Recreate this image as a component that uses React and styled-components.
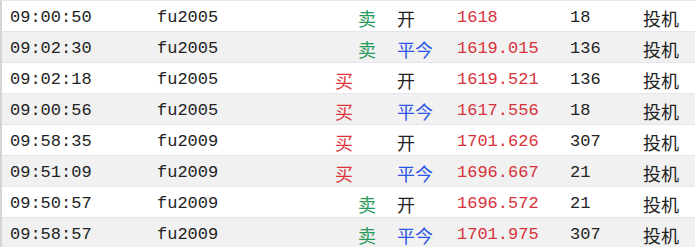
import styled, { createGlobalStyle } from 'styled-components';

const GlobalStyle = createGlobalStyle`
  html, body {
    margin: 0;
    padding: 0;
    background: #ffffff;
  }
`;

const Table = styled.div`
  width: 695px;
  height: 247px;
  overflow: hidden;
  border-top: 1px solid #e6e6ea;
  border-left: 2px solid #d4d4d4;
  box-sizing: border-box;
  font-family: "Liberation Mono", "Noto Sans CJK SC", monospace;
  font-size: 17px;
  color: #222222;
`;

const Row = styled.div`
  display: grid;
  grid-template-columns: 147px 178px 62px 60px 113px 73px 1fr;
  align-items: center;
  height: 27px;
  padding: 3px 0 0 8px;
  box-sizing: content-box;
  border-bottom: 1px solid #e4e4ec;
  background: ${(p) => (p.$alt ? '#f1f1f1' : '#ffffff')};
`;

const Cell = styled.span`
  white-space: nowrap;
`;

const Cjk = styled.span`
  font-family: "Noto Sans CJK SC", sans-serif;
  font-size: 18px;
  white-space: nowrap;
  color: ${(p) => p.$color || '#222222'};
  padding-left: ${(p) => p.$indent || 0}px;
`;

const Price = styled.span`
  color: #d8323a;
  white-space: nowrap;
`;

const rows = [
  ['09:00:50', 'fu2005', 'sell', 'open', '1618', '18'],
  ['09:02:30', 'fu2005', 'sell', 'close', '1619.015', '136'],
  ['09:02:18', 'fu2005', 'buy', 'open', '1619.521', '136'],
  ['09:00:56', 'fu2005', 'buy', 'close', '1617.556', '18'],
  ['09:58:35', 'fu2009', 'buy', 'open', '1701.626', '307'],
  ['09:51:09', 'fu2009', 'buy', 'close', '1696.667', '21'],
  ['09:50:57', 'fu2009', 'sell', 'open', '1696.572', '21'],
  ['09:58:57', 'fu2009', 'sell', 'close', '1701.975', '307'],
];

export default function App() {
  return (
    <>
      <GlobalStyle />
      <Table>
        {rows.map(([time, code, side, offset, price, vol], i) => (
          <Row key={i} $alt={i % 2 === 1}>
            <Cell>{time}</Cell>
            <Cell>{code}</Cell>
            {side === 'sell' ? (
              <Cjk $color="#2a9a5c" $indent={23}>卖</Cjk>
            ) : (
              <Cjk $color="#dc3238">买</Cjk>
            )}
            {offset === 'open' ? (
              <Cjk>开</Cjk>
            ) : (
              <Cjk $color="#2a55e6">平今</Cjk>
            )}
            <Price>{price}</Price>
            <Cell>{vol}</Cell>
            <Cjk>投机</Cjk>
          </Row>
        ))}
      </Table>
    </>
  );
}
